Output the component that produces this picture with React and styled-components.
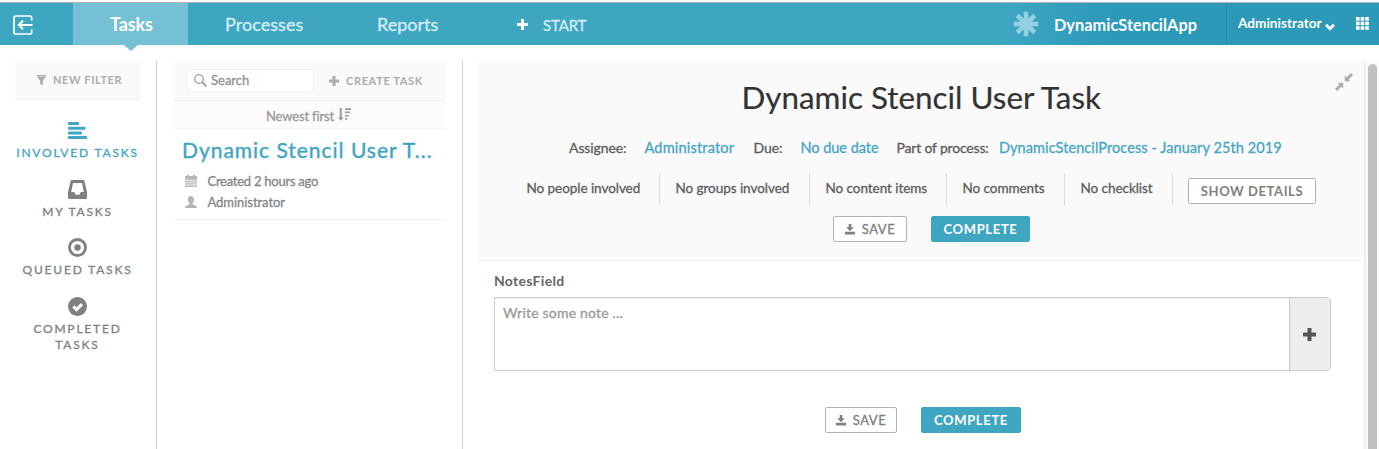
import React from "react";
import styled, { createGlobalStyle, css } from "styled-components";

const teal = "#3fa6c2";

const GlobalStyle = createGlobalStyle`
  * { box-sizing: border-box; }
  html, body { margin: 0; padding: 0; overflow: hidden; background: #fff; }
  body { font-family: Lato, "Liberation Sans", sans-serif; color: #666; }
  svg { display: block; flex: none; }
  button { font-family: inherit; margin: 0; }
`;

const Page = styled.div`
  width: 1379px;
  height: 449px;
  overflow: hidden;
  display: flex;
  flex-direction: column;
`;

const Label = styled.span`
  white-space: nowrap;
  font-size: ${(p) => p.$size || 14}px;
  font-weight: ${(p) => p.$weight || 400};
  letter-spacing: ${(p) => p.$track || 0}px;
  line-height: 20px;
  -webkit-text-stroke: ${(p) => (p.$weight === 700 ? 0 : 0.3)}px currentColor;
`;

const Header = styled.header`
  flex: none;
  height: 45px;
  padding-top: 2px;
  display: flex;
  flex-direction: column;
`;
const HeaderBar = styled.div`
  height: 43px;
  border-top: 1px solid #b3b3b3;
  display: flex;
  color: #d3edf5;
  background: linear-gradient(90deg, ${teal} 1000px, #2c99b9 1110px);
`;
const ExitCell = styled.div`
  width: 73px;
  padding: 12px 0 0 13px;
`;
const Tab = styled.a`
  position: relative;
  width: ${(p) => p.$width}px;
  height: 42px;
  display: flex;
  align-items: center;
  padding-left: ${(p) => p.$pad}px;
  ${(p) =>
    p.$active &&
    css`
      color: #fff;
      background: #76c0d5;
      &::after {
        content: "";
        position: absolute;
        left: 51px;
        top: 42px;
        border: 7px solid transparent;
        border-top: 6px solid #76c0d5;
        border-bottom: 0;
      }
    `}
`;
const StartLink = styled.a`
  width: 533px;
  display: flex;
  align-items: center;
  gap: 15px;
  padding: 1px 0 0 37px;
`;
const AppName = styled.div`
  width: 213px;
  display: flex;
  align-items: center;
  gap: 15px;
  color: #fff;
  padding-top: 1px;
  svg { margin-top: -2px; }
`;
const UserMenu = styled.div`
  width: 130px;
  display: flex;
  align-items: center;
  gap: 3px;
  padding: 0 0 2px 11px;
  color: #fff;
  border-left: 1px solid #278daa;
  svg { margin-top: 7px; }
`;
const AppsCell = styled.div`
  padding-top: 14px;
`;

const Body = styled.main`
  flex: 1;
  display: flex;
  padding-top: 16px;
`;

const Sidebar = styled.nav`
  width: 157px;
  border-right: 1px solid #ccc;
  padding-left: 15px;
`;
const NewFilter = styled.div`
  width: 125px;
  height: 39px;
  display: flex;
  align-items: center;
  gap: 7px;
  padding-left: 22px;
  color: #a9adad;
  background: #fafafa;
  border-bottom: 1px solid #f2f2f2;
`;
const FilterList = styled.div`
  width: 125px;
  padding-top: 21px;
`;
const FilterItem = styled.a`
  display: flex;
  flex-direction: column;
  align-items: center;
  height: 58.6px;
  text-align: center;
  color: ${(p) => (p.$active ? teal : "#808080")};
  span { line-height: 16px; margin-top: 5px; white-space: normal; }
`;

const TaskList = styled.section`
  width: 306px;
  border-right: 1px solid #d0d0d0;
  padding: 0 16px;
`;
const ListToolbar = styled.div`
  height: 39px;
  display: flex;
  align-items: center;
  padding-left: 13px;
  color: #a9adad;
  background: #fafafa;
`;
const SearchBox = styled.div`
  width: 128px;
  height: 23px;
  display: flex;
  align-items: center;
  gap: 4px;
  padding: 0 0 1px 7px;
  margin-right: 15px;
  border: 1px solid #f2f2f2;
  border-radius: 4px;
  background: #fff;
  color: #8e9292;
`;
const CreateTask = styled.a`
  display: flex;
  align-items: center;
  gap: 7px;
`;
const SortRow = styled.div`
  height: 29px;
  display: flex;
  align-items: center;
  gap: 4px;
  padding: 2px 0 0 93px;
  color: #999;
  background: #fcfcfc;
  border-top: 1px solid #f4f4f4;
  border-bottom: 1px solid #f4f4f4;
  svg { margin-top: -2px; }
`;
const TaskCard = styled.article`
  height: 91px;
  padding: 11px 0 0 9px;
  border-bottom: 1px solid #f3f3f3;
`;
const TaskName = styled.div`
  height: 20px;
  line-height: 20px;
  font-size: 21px;
  font-weight: 400;
  -webkit-text-stroke: 0.4px ${teal};
  letter-spacing: 0.98px;
  white-space: nowrap;
  color: ${teal};
`;
const TaskMeta = styled.div`
  display: flex;
  align-items: center;
  gap: 10.5px;
  height: 21px;
  padding-left: 3px;
  margin-top: ${(p) => p.$gap || 0}px;
  color: #858585;
  svg { color: #b5b5b5; }
`;

const Detail = styled.section`
  width: 901px;
  padding-left: 15px;
`;
const DetailHead = styled.div`
  position: relative;
  height: 200px;
  display: flex;
  flex-direction: column;
  background: #fafafa;
  border-bottom: 1px solid #f3f3f3;
  color: #5c5c5c;
`;
const Title = styled.h1`
  margin: 16px 0 0 263.5px;
  font-size: 31.4px;
  line-height: 40px;
  font-weight: 400;
  white-space: nowrap;
  color: #333;
  -webkit-text-stroke: 0.2px #333;
`;
const Collapse = styled.div`
  position: absolute;
  right: 11px;
  top: 12px;
`;
const Facts = styled.div`
  display: flex;
  height: 20px;
  margin: 20px 0 0 91px;
`;
const Fact = styled.div`
  width: ${(p) => p.$width}px;
  line-height: 20px;
  color: ${(p) => (p.$link ? "#46a6c4" : "inherit")};
`;
const Stats = styled.div`
  display: flex;
  height: 33px;
  margin: 16px 0 0 33px;
`;
const Stat = styled.div`
  width: ${(p) => p.$width}px;
  padding: 4px 0 0 15.5px;
  line-height: 20px;
  border-right: 1px solid #ddd;
`;
const Button = styled.button`
  width: ${(p) => p.$width}px;
  height: 26px;
  display: flex;
  align-items: center;
  justify-content: center;
  gap: 7px;
  padding: 0;
  border-radius: 2px;
  color: ${(p) => (p.$primary ? "#fff" : "#808080")};
  background: ${(p) => (p.$primary ? teal : "#fff")};
  border: 1px solid ${(p) => (p.$primary ? teal : "#b3b3b3")};
  margin: ${(p) => p.$margin || 0};
`;
const Actions = styled.div`
  display: flex;
  gap: 24px;
  padding-left: ${(p) => p.$left}px;
  margin-top: ${(p) => p.$top}px;
`;
const Form = styled.div`
  padding: 9px 0 0 16px;
  color: #666;
`;
const NoteField = styled.div`
  display: flex;
  width: 837px;
  height: 74px;
  margin-top: 6px;
  border: 1px solid #ccc;
  border-radius: 0 4px 4px 0;
  overflow: hidden;
`;
const NoteInput = styled.div`
  flex: 1;
  padding: 4px 8px;
  color: #999;
  background: #fff;
  box-shadow: inset 0 1px 1px rgba(0, 0, 0, 0.075);
`;
const AddNote = styled.div`
  width: 41px;
  display: grid;
  place-items: center;
  padding-right: 2px;
  border-left: 1px solid #ccc;
  background: #eee;
  color: #555;
`;
const ScrollTrack = styled.div`
  width: 15px;
  padding: 3px 0 0 2px;
  background: #fafafa;
  border-left: 2px solid #efefef;
`;
const ScrollThumb = styled.div`
  width: 9px;
  height: 400px;
  border-radius: 5px;
  background: #c1c1c1;
`;

const Plus = ({ size, thick }) => {
  const a = (size - thick) / 2;
  return (
    <svg width={size} height={size} fill="currentColor">
      <rect x={a} width={thick} height={size} rx="0.5" />
      <rect y={a} width={size} height={thick} rx="0.5" />
    </svg>
  );
};
const ExitIcon = () => (
  <svg width="20" height="20" fill="none" stroke="#fff">
    <path d="M18.7 5.6V2.8Q18.7 1 17 1H2.8Q1 1 1 2.8V17.2Q1 19 2.8 19H17Q18.7 19 18.7 17.2V14.4" strokeWidth="1.7" />
    <path d="M19.5 10H6M10 5.7 5.8 10l4.2 4.3" strokeWidth="2" />
  </svg>
);
const Asterisk = () => (
  <svg width="26" height="26" viewBox="-13 -13 26 26" stroke="#95cfe0" strokeWidth="4.6">
    {[0, 45, 90, 135].map((r) => (
      <path key={r} d="M0-12.3V12.3" transform={`rotate(${r})`} />
    ))}
  </svg>
);
const Chevron = () => (
  <svg width="10" height="8" fill="none" stroke="#fff" strokeWidth="2.8">
    <path d="M1 1.8 5 5.8 9 1.8" />
  </svg>
);
const AppsGrid = () => (
  <svg width="13" height="13" fill="#fff">
    {[0, 4.6, 9.2].map((y) => [0, 4.6, 9.2].map((x) => <rect key={x + "-" + y} x={x} y={y} width="3.6" height="3.6" />))}
  </svg>
);
const Funnel = () => (
  <svg width="9" height="11" fill="currentColor">
    <path d="M0 0h9v1.5L5.8 6v4.6L3.2 8.7V6L0 1.5z" />
    <path d="M1.3 1.5h6.4" stroke="#e2e2e2" strokeWidth=".7" />
  </svg>
);
const AlignIcon = () => (
  <svg width="19" height="19" fill="currentColor">
    <rect width="11" height="3" y="1" rx=".8" />
    <rect width="17.5" height="3" y="5.7" rx=".8" />
    <rect width="14" height="3" y="10.4" rx=".8" />
    <rect width="19" height="3" y="15.1" rx=".8" />
  </svg>
);
const Inbox = () => (
  <svg width="19" height="19" fill="currentColor">
    <path fillRule="evenodd" d="M3.7 0h11.6q.9 0 1.1.9L19 12v5.5q0 1.5-1.3 1.5H1.3Q0 19 0 17.5V12L2.6.9Q2.8 0 3.7 0zM5 3 3.2 12h2.9l1.600 2.800h3.600L12.900 12h2.900L14 3z" />
  </svg>
);
const Target = () => (
  <svg width="19" height="19" fill="none">
    <circle cx="9.5" cy="9.5" r="8" stroke="currentColor" strokeWidth="2.8" />
    <circle cx="9.5" cy="9.5" r="3.2" fill="currentColor" />
  </svg>
);
const Done = () => (
  <svg width="19" height="19" fill="none">
    <circle cx="9.5" cy="9.5" r="9.5" fill="currentColor" />
    <path d="m5.3 9.4 3.2 3.2 5.5-5.5" stroke="#fff" strokeWidth="3" />
  </svg>
);
const Magnifier = () => (
  <svg width="13" height="13" fill="none" stroke="#999d9d">
    <circle cx="5" cy="5" r="4.3" strokeWidth="1.3" />
    <path d="m8.2 8.2 4.2 4.2" strokeWidth="1.9" />
  </svg>
);
const SortIcon = () => (
  <svg width="13" height="13" fill="currentColor">
    <path d="M1.8 0h2v9.5h1.800L2.800 12.800 0 9.500h1.800z" />
    <path d="M7 .3h6v1.6H7zM7 3.6h5v1.6H7zM7 6.9h3.700v1.600H7zM7 10.200h2.300v1.600H7z" />
  </svg>
);
const Calendar = () => (
  <svg width="12" height="12">
    <path d="M0 2h12v10H0z" fill="#c2c2c2" />
    <path d="M0 1h12v2.5H0zM2 0h2v2H2zM8 0h2v2H8z" fill="currentColor" />
    <path d="M0 5.5h12M0 7.7h12M0 9.9h12" stroke="#fff" strokeWidth=".6" />
  </svg>
);
const Person = () => (
  <svg width="12" height="12" fill="currentColor">
    <path d="M6 0c2 0 3.2 1.3 3.2 3.2 0 1.7-.7 2.9-1.5 3.7v1.3c.5.9 4.3 1 4.3 3.8H0c0-2.8 3.8-2.9 4.3-3.8V6.9C3.5 6.1 2.8 4.9 2.8 3.2 2.8 1.3 4 0 6 0z" />
  </svg>
);
const CollapseIcon = () => (
  <svg width="18" height="18" fill="#a9adad">
    <path d="M9.8 8.2V2.500l1.800 1.800L16 0l2 2-4.300 4.400 1.800 1.800z" />
    <path d="M8.200 9.800v5.700l-1.800-1.800L2 18l-2-2 4.300-4.400-1.800-1.800z" />
  </svg>
);
const SaveIcon = () => (
  <svg width="10" height="11" fill="currentColor">
    <path d="M3.700 0h2.600v3.300h2.500L5 7.200 1.200 3.300h2.500zM0 7.800h10v2.700H0z" />
  </svg>
);

const SaveActions = ({ left, top, saveWidth, completeWidth }) => (
  <Actions $left={left} $top={top}>
    <Button $width={saveWidth}>
      <SaveIcon />
      <Label $size={13} $track={0.5}>SAVE</Label>
    </Button>
    <Button $width={completeWidth} $primary>
      <Label $size={13} $weight={700} $track={0.65}>COMPLETE</Label>
    </Button>
  </Actions>
);

const filters = [
  ["INVOLVED TASKS", AlignIcon, true],
  ["MY TASKS", Inbox],
  ["QUEUED TASKS", Target],
  ["COMPLETED TASKS", Done],
];
const facts = [
  { text: "Assignee:", width: 75.5, size: 14, track: -0.1 },
  { text: "Administrator", width: 109, size: 14.5, track: 0.2, link: true },
  { text: "Due:", width: 47, size: 14, track: -0.1 },
  { text: "No due date", width: 96, size: 14.5, track: -0.03, link: true },
  { text: "Part of process:", width: 102.5, size: 14, track: -0.18 },
  { text: "DynamicStencilProcess - January 25th 2019", width: 290, size: 14.5, track: 0.08, link: true },
];
const stats = [
  ["No people involved", 149],
  ["No groups involved", 150],
  ["No content items", 137],
  ["No comments", 118],
  ["No checklist", 108],
];

export default function App() {
  return (
    <Page>
      <GlobalStyle />
      <Header>
        <HeaderBar>
          <ExitCell><ExitIcon /></ExitCell>
          <Tab $active $width={115} $pad={37}><Label $size={18} $weight={700} $track={-0.15}>Tasks</Label></Tab>
          <Tab $width={151} $pad={37}><Label $size={18} $track={0.05}>Processes</Label></Tab>
          <Tab $width={141} $pad={38}><Label $size={18}>Reports</Label></Tab>
          <StartLink>
            <svg width="11" height="11" fill="#fff"><path d="M4 0h3v4h4v3H7v4H4V7H0V4h4z" /></svg>
            <Label $size={15} $track={-0.15}>START</Label>
          </StartLink>
          <AppName><Asterisk /><Label $size={16.3} $weight={700} $track={0.05}>DynamicStencilApp</Label></AppName>
          <UserMenu><Label $size={13.6} $weight={700}>Administrator</Label><Chevron /></UserMenu>
          <AppsCell><AppsGrid /></AppsCell>
        </HeaderBar>
      </Header>
      <Body>
        <Sidebar>
          <NewFilter><Funnel /><Label $size={11} $weight={700} $track={0.6}>NEW FILTER</Label></NewFilter>
          <FilterList>
            {filters.map(([name, Icon, active]) => (
              <FilterItem key={name} $active={active}>
                <Icon />
                <Label $size={12} $track={1.8}>{name}</Label>
              </FilterItem>
            ))}
          </FilterList>
        </Sidebar>
        <TaskList>
          <ListToolbar>
            <SearchBox><Magnifier /><Label $size={13}>Search</Label></SearchBox>
            <CreateTask><Plus size={10} thick={3} /><Label $size={11} $weight={700} $track={0.65}>CREATE TASK</Label></CreateTask>
          </ListToolbar>
          <SortRow><Label $size={13} $track={-0.15}>Newest first</Label><SortIcon /></SortRow>
          <TaskCard>
            <TaskName>Dynamic Stencil User T...</TaskName>
            <TaskMeta $gap={10}><Calendar /><Label $size={13} $track={-0.25}>Created 2 hours ago</Label></TaskMeta>
            <TaskMeta><Person /><Label $size={13} $track={-0.05}>Administrator</Label></TaskMeta>
          </TaskCard>
        </TaskList>
        <Detail>
          <DetailHead>
            <Collapse><CollapseIcon /></Collapse>
            <Title>Dynamic Stencil User Task</Title>
            <Facts>
              {facts.map(({ text, width, size, track, link }) => (
                <Fact key={text} $width={width} $link={link}><Label $size={size} $track={track}>{text}</Label></Fact>
              ))}
            </Facts>
            <Stats>
              {stats.map(([text, width]) => (
                <Stat key={text} $width={width}><Label $size={13.5} $track={-0.05}>{text}</Label></Stat>
              ))}
              <Button $width={128} $margin="5px 0 0 15px"><Label $size={13} $weight={700} $track={0.6}>SHOW DETAILS</Label></Button>
            </Stats>
            <SaveActions left={355} top={10} saveWidth={74} completeWidth={99} />
          </DetailHead>
          <Form>
            <Label $weight={700} $track={0.3}>NotesField</Label>
            <NoteField>
              <NoteInput><Label $track={0.2}>Write some note ...</Label></NoteInput>
              <AddNote><Plus size={13} thick={4} /></AddNote>
            </NoteField>
            <SaveActions left={331} top={36} saveWidth={72} completeWidth={100} />
          </Form>
        </Detail>
        <ScrollTrack><ScrollThumb /></ScrollTrack>
      </Body>
    </Page>
  );
}
